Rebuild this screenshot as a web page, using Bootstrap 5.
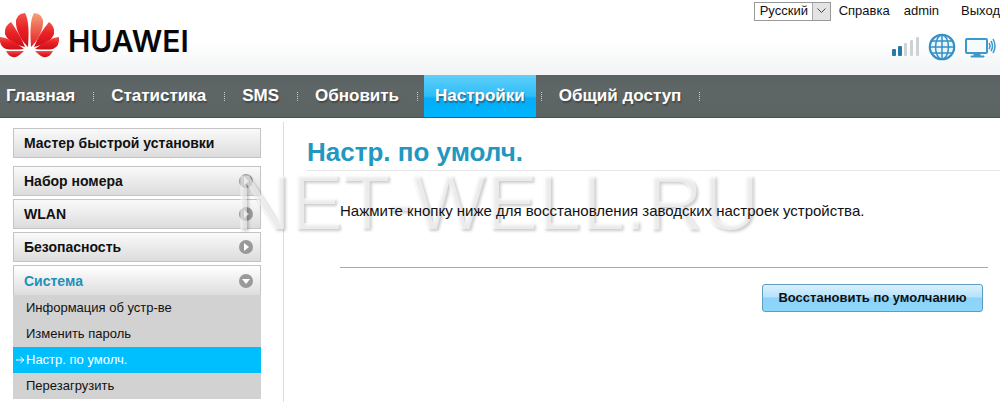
<!DOCTYPE html>
<html lang="ru">
<head>
<meta charset="utf-8">
<meta name="viewport" content="width=device-width, initial-scale=1">
<title>HUAWEI</title>
<link href="https://cdn.jsdelivr.net/npm/bootstrap@5.3.0/dist/css/bootstrap.min.css" rel="stylesheet">
<style>
body{font-family:"Liberation Sans",Arial,sans-serif;font-size:15px;line-height:20px;color:#111;background:#fff}
a{color:inherit;text-decoration:none}
.top-bar{height:75px;background:linear-gradient(#fff 55%,#f1f3f4)}
.brand-word{font:600 30px/34px Inter,sans-serif;color:#080808}
.top-links{font-size:13px;padding-top:1px}
.lang{appearance:none;width:77px;height:19px;border:1px solid #999;border-radius:0;padding:0 0 0 5px;font-size:13px;line-height:16px;color:#111;background:#fff}
.lang-arrow{right:1px;top:1px;width:18px;height:17px;background:#e3e3e3;border-left:1px solid #aaa;pointer-events:none}
.link-user{margin:0 22px 0 14px}
.main-nav{height:43px;background:linear-gradient(#596162,#5f6666 30%,#5b6363);border-bottom:1px solid #484f4f;font-size:17px;font-weight:700;color:#fff;padding-left:6px}
.main-nav a{text-shadow:1px 2px 1px #3338;line-height:42px}
.main-nav .sep{width:1px;height:9px;margin:0 17px 0 18px;border-left:1px dotted #c9cece}
.main-nav .sep-before{margin-right:6px}
.main-nav .sep-after{margin-left:5px}
.main-nav a.on{padding:0 11px;background:linear-gradient(#5fcffa,#2fbdf7 50%,#06adf7 55%,#00b4ff)}
.side{width:284px;padding:6px 22px 3px 13px;border-right:1px solid #ddd;margin-top:4px}
.side-head{height:30px;border:1px solid #c4c4c4;background:linear-gradient(#fafafa,#dcdcdc);padding:0 7px 0 10px;font-size:14px;font-weight:700;color:#111;margin-bottom:3px}
.side-head.first{margin-bottom:8px}
.side-head.open{color:#2191b8;margin:0;border-bottom:0;background:linear-gradient(#fff,#ddd)}
.sub{background:#d2d2d2;font-size:13px}
.sub a{display:flex;height:26px;align-items:center;padding-left:13px;position:relative}
.sub a.on{background:#00bfff;color:#fff}
.sub svg{position:absolute;left:3px}
.content-pane{padding:16px 12px 0 23px}
.page-title{font-size:26px;line-height:36px;font-weight:700;color:#2297c0;margin:0 -12px 0 0;border-bottom:1px solid #e6e6e6}
.msg{margin:30px 0 0 33px;padding-bottom:46px;border-bottom:1px solid #aaa}
.msg span{position:relative;z-index:2}
.restore{height:28px;width:221px;border:1px solid #5e9dbd;border-radius:3px;background:linear-gradient(#d9f0fd,#b8e3fc 45%,#8bd3fa 50%,#8fd6fb);font-size:13px;font-weight:700;color:#111;padding:0;margin:16px 5px 0 0}
.watermark{left:234px;top:158px;z-index:1;font-size:78px;line-height:88px;color:#fff9;text-shadow:2px 2px 3px #0003;pointer-events:none;white-space:nowrap}
</style>
</head>
<body class="position-relative overflow-x-hidden">
<header class="top-bar d-flex justify-content-between">
  <a href="#" class="d-flex align-items-start" aria-label="HUAWEI">
    <svg width="60" height="60" viewBox="0 0 60 60">
      <defs><linearGradient id="r" x1="0" y1="0" x2="0" y2="1"><stop offset="0" stop-color="#ef5548"/><stop offset=".45" stop-color="#ea2026"/><stop offset="1" stop-color="#cc1018"/></linearGradient><linearGradient id="o" x1="0" y1="0" x2="0" y2="1"><stop offset="0" stop-color="#f4a27a"/><stop offset="1" stop-color="#e51b20"/></linearGradient></defs>
      <g fill="url(#r)">
        <path d="M28 47C29 33 29 20 25 13Q15 14 16 24C17 34 23 42 28 47Z"/>
        <path fill="url(#o)" d="M31 47C30 33 30 20 34 13Q44 14 43 24C42 34 36 42 31 47Z"/>
        <path d="M25 47C21 37 16 29 11 22Q4 26 5 34C8 42 17 45 25 47Z"/>
        <path d="M34 47C38 37 43 29 49 22Q55 26 54 34C51 42 42 45 34 47Z"/>
        <path d="M24 49C15 42 8 38 0 37Q-1 46 6 49Q12 50 24 49Z"/>
        <path d="M35 49C44 42 51 38 59 37Q60 46 53 49Q47 50 35 49Z"/>
        <path d="M24 51H6Q11 60 18 56Q21 54 24 51Z"/>
        <path d="M35 51H53Q48 60 41 56Q38 54 35 51Z"/>
      </g>
    </svg>
    <span class="brand-word pt-4 ps-2">HUAWEI</span>
  </a>
  <div class="top-links">
    <div class="d-flex align-items-center">
      <div class="position-relative d-flex me-2">
        <select id="lang" class="lang" aria-label="Язык"><option>Русский</option></select>
        <span class="lang-arrow position-absolute d-flex align-items-center justify-content-center"><svg width="9" height="6" viewBox="0 0 9 6" fill="none" stroke="#444"><path d="M.5.5l4 4 4-4"/></svg></span>
      </div>
      <a href="#">Справка</a>
      <a href="#" class="link-user">admin</a>
      <a href="#">Выход</a>
    </div>
    <div class="d-flex justify-content-end align-items-center gap-2 pt-2 mt-1 pe-1">
      <svg width="28" height="22" viewBox="0 0 28 22"><g fill="#cdd2d6"><rect x="12" y="7" width="3" height="13" rx="1"/><rect x="18" y="4" width="3" height="16" rx="1"/><rect x="24" y="1" width="3" height="19" rx="1"/></g><g fill="#267aa6"><rect x="0" y="13" width="4" height="7" rx="1"/><rect x="6" y="10" width="4" height="10" rx="1"/></g></svg>
      <svg width="28" height="28" viewBox="0 0 28 28" fill="none" stroke="#378fc4" stroke-width="1.5"><circle cx="14" cy="14" r="12.2" stroke-width="2.2" fill="#e8f6fd"/><ellipse cx="14" cy="14" rx="6.5" ry="12"/><path d="M14 2v24M2 14h24M4 8h20M4 20h20"/></svg>
      <svg width="32" height="22" viewBox="0 0 32 22" fill="none" stroke="#3d98cb"><rect x="2" y="3" width="21" height="14" rx="1" stroke-width="2" fill="#f5fbfe"/><path d="M10 18h6v2h4v1H7v-1h3z" fill="#3d98cb"/><path d="M25 7q2 3 0 6M27 5q3 5 0 10M29 3q4 7 0 14" stroke-width="1.500"/></svg>
    </div>
  </div>
</header>
<nav class="main-nav d-flex align-items-center text-nowrap">
  <a href="#">Главная</a><span class="sep"></span>
  <a href="#">Статистика</a><span class="sep"></span>
  <a href="#">SMS</a><span class="sep"></span>
  <a href="#">Обновить</a><span class="sep sep-before"></span>
  <a href="#" class="on">Настройки</a><span class="sep sep-after"></span>
  <a href="#">Общий доступ</a><span class="sep"></span>
</nav>
<div class="d-flex">
  <aside class="side flex-shrink-0">
    <a href="#" class="side-head first d-flex align-items-center">Мастер быстрой установки</a>
    <a href="#" class="side-head d-flex align-items-center justify-content-between">Набор номера <svg width="14" height="14"><circle cx="7" cy="7" r="7" fill="#999"/><path d="M5 3l5 4-5 4z" fill="#fff"/></svg></a>
    <a href="#" class="side-head d-flex align-items-center justify-content-between">WLAN <svg width="14" height="14"><circle cx="7" cy="7" r="7" fill="#999"/><path d="M5 3l5 4-5 4z" fill="#fff"/></svg></a>
    <a href="#" class="side-head d-flex align-items-center justify-content-between">Безопасность <svg width="14" height="14"><circle cx="7" cy="7" r="7" fill="#999"/><path d="M5 3l5 4-5 4z" fill="#fff"/></svg></a>
    <a href="#" class="side-head open d-flex align-items-center justify-content-between">Система <svg width="14" height="14"><circle cx="7" cy="7" r="7" fill="#999"/><path d="M3 5l4 5 4-5z" fill="#fff"/></svg></a>
    <div class="sub">
      <a href="#">Информация об устр-ве</a>
      <a href="#">Изменить пароль</a>
      <a href="#" class="on"><svg width="9" height="8" fill="none" stroke="#fff"><path d="M0 4h8M4.500 1L8 4 4.500 7"/></svg>Настр. по умолч.</a>
      <a href="#">Перезагрузить</a>
    </div>
  </aside>
  <main class="content-pane flex-grow-1">
    <h1 class="page-title">Настр. по умолч.</h1>
    <p class="msg"><span>Нажмите кнопку ниже для восстановления заводских настроек устройства.</span></p>
    <div class="d-flex justify-content-end"><button type="button" class="restore">Восстановить по умолчанию</button></div>
  </main>
</div>
<div class="watermark position-absolute">NET-WELL.RU</div>
</body>
</html>
